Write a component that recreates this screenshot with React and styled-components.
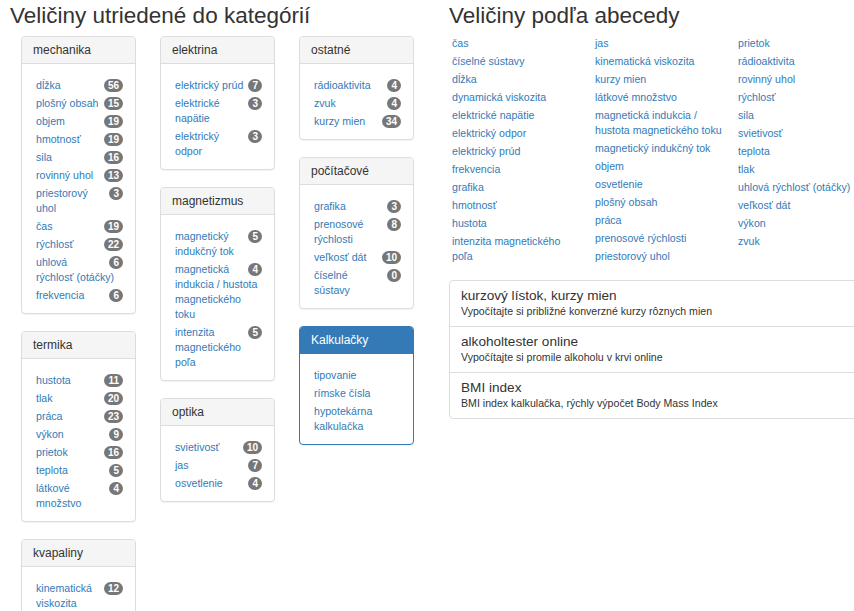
import React from 'react';
import styled, { createGlobalStyle } from 'styled-components';

const GlobalStyle = createGlobalStyle`
  html, body {
    margin: 0;
    padding: 0;
    background: #fff;
    overflow: hidden;
  }
  body {
    font-family: 'Liberation Sans', Arial, sans-serif;
    color: #333;
  }
`;

const Page = styled.div`
  display: flex;
  padding-left: 10px;
  width: 890px;
`;

const LeftSection = styled.section`
  flex: 0 0 439px;
`;

const RightSection = styled.section`
  flex: 0 0 440px;
`;

const Title = styled.h2`
  margin: 4px 0 8px;
  font-size: 22.5px;
  line-height: 24px;
  font-weight: normal;
  color: #333;
  white-space: nowrap;
`;

const PanelGrid = styled.div`
  display: grid;
  grid-template-columns: repeat(3, 115px);
  column-gap: 24px;
  padding-left: 11px;
  align-items: start;
`;

const PanelStack = styled.div`
  display: flex;
  flex-direction: column;
  gap: 17px;
`;

const Panel = styled.div`
  border: 1px solid ${p => (p.$primary ? '#337ab7' : '#ddd')};
  border-radius: 4px;
  background: #fff;
  box-shadow: 0 1px 1px rgba(0, 0, 0, 0.05);
`;

const PanelHeading = styled.div`
  padding: 6px 11px 5px;
  font-size: 12px;
  line-height: 15px;
  color: ${p => (p.$primary ? '#fff' : '#333')};
  background: ${p => (p.$primary ? '#337ab7' : '#f5f5f5')};
  border-bottom: 1px solid ${p => (p.$primary ? '#337ab7' : '#ddd')};
  border-radius: 3px 3px 0 0;
`;

const PanelBody = styled.div`
  padding: 14px 12px 7px 14px;
`;

const List = styled.ul`
  list-style: none;
  margin: 0;
  padding: 0;
`;

const Item = styled.li`
  font-size: 10.6px;
  line-height: 15px;
  margin-bottom: 3px;
  padding-right: ${p => p.$pad || 0}px;
`;

const Link = styled.a`
  color: #337ab7;
  text-decoration: none;
`;

const Badge = styled.span`
  float: right;
  box-sizing: border-box;
  min-width: 13px;
  height: 13px;
  margin: 1px 0 0 3px;
  padding: 0 4px;
  border-radius: 7px;
  background: #777;
  color: #fff;
  font-size: 10px;
  font-weight: bold;
  line-height: 13px;
  text-align: center;
`;

const AlphaGrid = styled.div`
  display: grid;
  grid-template-columns: repeat(3, 143px);
  margin: 1px 0 13px 3px;
`;

const ListGroup = styled.div`
  border: 1px solid #ddd;
  border-radius: 4px;
  width: 430px;
`;

const ListGroupItem = styled.a`
  display: block;
  padding: 6px 11px 7px;
  text-decoration: none;
  color: #333;
  & + & {
    border-top: 1px solid #ddd;
  }
`;

const ItemTitle = styled.div`
  font-size: 13.6px;
  line-height: 17px;
`;

const ItemDesc = styled.div`
  font-size: 10.6px;
  line-height: 15px;
`;

const columns = [
  [
    ['mechanika', [
      ['dĺžka', 56], ['plošný obsah', 15], ['objem', 19], ['hmotnosť', 19], ['sila', 16],
      ['rovinný uhol', 13], ['priestorový uhol', 3], ['čas', 19], ['rýchlosť', 22],
      ['uhlová rýchlosť (otáčky)', 6], ['frekvencia', 6],
    ]],
    ['termika', [
      ['hustota', 11], ['tlak', 20], ['práca', 23], ['výkon', 9], ['prietok', 16],
      ['teplota', 5], ['látkové množstvo', 4],
    ]],
    ['kvapaliny', [
      ['kinematická viskozita', 12], ['dynamická viskozita', 3],
    ]],
  ],
  [
    ['elektrina', [
      ['elektrický prúd', 7], ['elektrické napätie', 3], ['elektrický odpor', 3],
    ]],
    ['magnetizmus', [
      ['magnetický indukčný tok', 5], ['magnetická indukcia / hustota magnetického toku', 4],
      ['intenzita magnetického poľa', 5],
    ]],
    ['optika', [
      ['svietivosť', 10], ['jas', 7], ['osvetlenie', 4],
    ]],
  ],
  [
    ['ostatné', [
      ['rádioaktivita', 4], ['zvuk', 4], ['kurzy mien', 34],
    ]],
    ['počítačové', [
      ['grafika', 3], ['prenosové rýchlosti', 8], ['veľkosť dát', 10], ['číselné sústavy', 0],
    ]],
    ['Kalkulačky', [
      ['tipovanie'], ['rímske čísla'], ['hypotekárna kalkulačka'],
    ], true],
  ],
];

const alphabet = [
  ['čas', 'číselné sústavy', 'dĺžka', 'dynamická viskozita', 'elektrické napätie',
    'elektrický odpor', 'elektrický prúd', 'frekvencia', 'grafika', 'hmotnosť', 'hustota',
    'intenzita magnetického poľa'],
  ['jas', 'kinematická viskozita', 'kurzy mien', 'látkové množstvo',
    'magnetická indukcia / hustota magnetického toku', 'magnetický indukčný tok', 'objem',
    'osvetlenie', 'plošný obsah', 'práca', 'prenosové rýchlosti', 'priestorový uhol'],
  ['prietok', 'rádioaktivita', 'rovinný uhol', 'rýchlosť', 'sila', 'svietivosť', 'teplota',
    'tlak', 'uhlová rýchlosť (otáčky)', 'veľkosť dát', 'výkon', 'zvuk'],
];

const calculators = [
  ['kurzový lístok, kurzy mien', 'Vypočítajte si približné konverzné kurzy rôznych mien'],
  ['alkoholtester online', 'Vypočítajte si promile alkoholu v krvi online'],
  ['BMI index', 'BMI index kalkulačka, rýchly výpočet Body Mass Index'],
];

const App = () => {
  return (
    <>
      <GlobalStyle />
      <Page>
        <LeftSection>
          <Title>Veličiny utriedené do kategórií</Title>
          <PanelGrid>
            {columns.map((stack, i) => (
              <PanelStack key={i}>
                {stack.map(([name, items, primary]) => (
                  <Panel key={name} $primary={primary}>
                    <PanelHeading $primary={primary}>{name}</PanelHeading>
                    <PanelBody>
                      <List>
                        {items.map(([label, count]) => (
                          <Item key={label}>
                            {count !== undefined && <Badge>{count}</Badge>}
                            <Link href="#">{label}</Link>
                          </Item>
                        ))}
                      </List>
                    </PanelBody>
                  </Panel>
                ))}
              </PanelStack>
            ))}
          </PanelGrid>
        </LeftSection>
        <RightSection>
          <Title>Veličiny podľa abecedy</Title>
          <AlphaGrid>
            {alphabet.map((col, i) => (
              <List key={i}>
                {col.map(label => (
                  <Item key={label} $pad={14}>
                    <Link href="#">{label}</Link>
                  </Item>
                ))}
              </List>
            ))}
          </AlphaGrid>
          <ListGroup>
            {calculators.map(([title, desc]) => (
              <ListGroupItem key={title} href="#">
                <ItemTitle>{title}</ItemTitle>
                <ItemDesc>{desc}</ItemDesc>
              </ListGroupItem>
            ))}
          </ListGroup>
        </RightSection>
      </Page>
    </>
  );
};

export default App;
